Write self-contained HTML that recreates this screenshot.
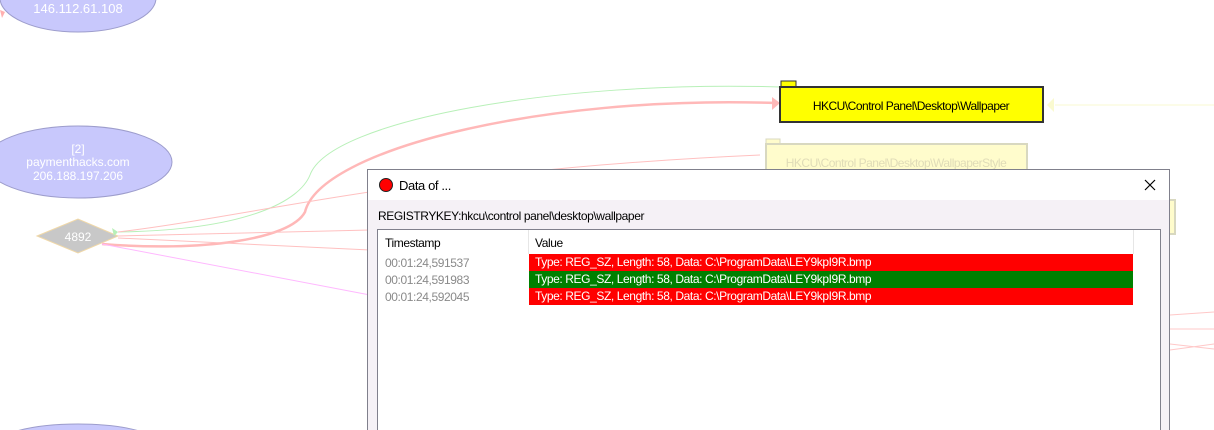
<!DOCTYPE html>
<html style="overflow:hidden;height:430px"><head><style>
body{margin:0;width:1214px;height:430px;overflow:hidden;background:#fff;position:relative;font-family:"Liberation Sans",sans-serif;}
.abs{position:absolute;}
.t{font-size:12px;letter-spacing:-0.4px;}
</style></head><body>
<svg class="abs" style="left:0;top:0" width="1214" height="430">
 <ellipse cx="78" cy="-2" rx="78" ry="34" fill="#c8c8fc" stroke="#9d9dcc"/>
 <text x="78" y="13" fill="#fff" font-size="13" text-anchor="middle" font-family="Liberation Sans">146.112.61.108</text>
 <path d="M0 10 L5 12 L2 18Z" fill="#ffb0b0"/>
 <ellipse cx="78" cy="162" rx="94" ry="36" fill="#c8c8fc" stroke="#9d9dcc"/>
 <text x="78" y="153" fill="#fff" font-size="12" text-anchor="middle" font-family="Liberation Sans">[2]</text>
 <text x="78" y="166" fill="#fff" font-size="12" text-anchor="middle" font-family="Liberation Sans">paymenthacks.com</text>
 <text x="78" y="180" fill="#fff" font-size="12" text-anchor="middle" font-family="Liberation Sans">206.188.197.206</text>
 <ellipse cx="78" cy="446" rx="84" ry="22" fill="#c8c8fc" stroke="#9d9dcc"/>
 <path d="M37 236 L78 219 L118 236 L78 253Z" fill="#c8c8c8" stroke="#f0d8a8"/>
 <text x="78" y="241" fill="#fff" font-size="12" text-anchor="middle" font-family="Liberation Sans">4892</text>
 <path d="M118 232 C250 230 300 200 310 175 C330 120 560 80 780 87" stroke="#b8f0b8" fill="none"/>
 <path d="M118 232 L112 228 L114 236Z" fill="#b8f0b8"/>
 <path d="M102 244 C200 252 290 240 305 212 C320 150 540 95 775 103" stroke="#ffb8b8" stroke-width="2.5" fill="none"/>
 <path d="M772 97 L780 103 L772 110Z" fill="#ffb8b8"/>
 <path d="M118 232 C260 215 420 170 760 155" stroke="#ffc0c0" fill="none"/>
 <path d="M118 236 L370 230" stroke="#ffc0c0" fill="none"/>
 <path d="M118 238 L370 250" stroke="#ffc0c0" fill="none"/>
 <path d="M102 244 L370 295" stroke="#ffb8ff" fill="none"/>
 <path d="M1170 315 L1214 312 M1170 329 L1214 329 M1170 344 L1214 349 M1170 350 L1214 344" stroke="#ffc8c8" fill="none"/>
 <path d="M1055 105 L1214 105" stroke="#fafad0"/>
 <path d="M1047 105 L1054 98 L1054 112Z" fill="#fafad0"/>
 <rect x="781" y="81" width="15" height="6" fill="#ffff00" stroke="#333"/>
 <rect x="780" y="87" width="263" height="35" fill="#ffff00" stroke="#333" stroke-width="2"/>
 <text x="911" y="110" font-size="12" text-anchor="middle" font-family="Liberation Sans" letter-spacing="-0.5">HKCU\Control Panel\Desktop\Wallpaper</text>
 <rect x="766" y="139" width="14" height="5" fill="#fffccc" stroke="#d8d8c0"/>
 <rect x="766" y="144" width="261" height="40" fill="#fffccc" stroke="#d8d8c0" stroke-width="2"/>
 <text x="896" y="167" font-size="12" fill="#e0dcb8" text-anchor="middle" font-family="Liberation Sans" letter-spacing="-0.5">HKCU\Control Panel\Desktop\WallpaperStyle</text>
 <rect x="1165" y="200" width="10" height="34" fill="#fffccc" stroke="#d8d8c0" stroke-width="2"/>
</svg>
<div class="abs" style="left:367px;top:169px;width:801px;height:261px;background:#f5f1f6;border:1px solid #80808c;border-bottom:none;overflow:hidden;">
 <div class="abs" style="left:0;top:0;width:801px;height:30px;background:#fff;"></div>
 <div class="abs" style="left:11px;top:8px;width:12px;height:12px;border-radius:50%;background:#f00;border:1px solid #222;"></div>
 <div class="abs t" style="left:31px;top:8px;font-size:13px;">Data of ...</div>
 <svg class="abs" style="left:776px;top:9px" width="12" height="12"><path d="M1 1L11 11M11 1L1 11" stroke="#000" stroke-width="1.2"/></svg>
 <div class="abs t" style="left:10px;top:39px;">REGISTRYKEY:hkcu\control panel\desktop\wallpaper</div>
 <div class="abs" style="left:9px;top:59px;width:782px;height:220px;background:#fff;border:1px solid #80808c;">
  <div class="abs" style="left:150px;top:0;width:1px;height:24px;background:#e6e6e6"></div>
  <div class="abs" style="left:755px;top:0;width:1px;height:24px;background:#e6e6e6"></div>
  <div class="abs t" style="left:7px;top:6px;">Timestamp</div>
  <div class="abs t" style="left:157px;top:6px;">Value</div>
  <div class="abs t" style="left:7px;top:25px;color:#8a8a8a;line-height:17px;">00:01:24,591537<br>00:01:24,591983<br>00:01:24,592045</div>
  <div class="abs t" style="left:151px;top:24px;width:604px;height:17px;background:#f00;color:#fff;line-height:17px;padding-left:6px;box-sizing:border-box;">Type: REG_SZ, Length: 58, Data: C:\ProgramData\LEY9kpI9R.bmp</div>
  <div class="abs t" style="left:151px;top:41px;width:604px;height:17px;background:#008000;color:#fff;line-height:17px;padding-left:6px;box-sizing:border-box;">Type: REG_SZ, Length: 58, Data: C:\ProgramData\LEY9kpI9R.bmp</div>
  <div class="abs t" style="left:151px;top:58px;width:604px;height:17px;background:#f00;color:#fff;line-height:17px;padding-left:6px;box-sizing:border-box;">Type: REG_SZ, Length: 58, Data: C:\ProgramData\LEY9kpI9R.bmp</div>
 </div>
</div>
</body></html>
